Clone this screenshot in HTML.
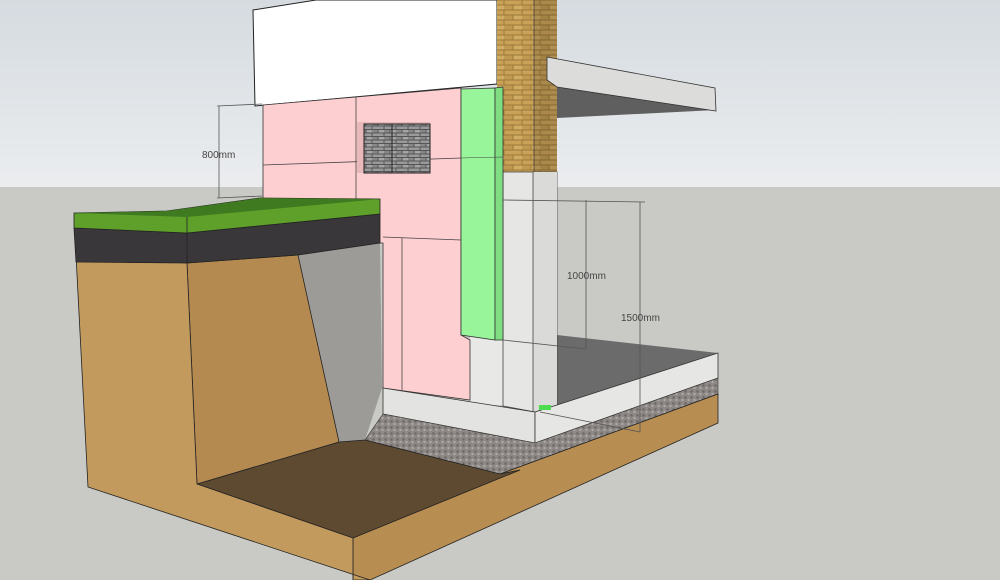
<!DOCTYPE html>
<html><head><meta charset="utf-8"><style>
html,body{margin:0;padding:0;width:1000px;height:580px;overflow:hidden}
svg{display:block}
text{font-family:"Liberation Sans",sans-serif;font-size:10px;fill:#444}
</style></head><body>
<svg width="1000" height="580" viewBox="0 0 1000 580" xmlns="http://www.w3.org/2000/svg">
<defs>
<linearGradient id="sky" x1="0" y1="0" x2="0" y2="1">
<stop offset="0" stop-color="#d5dbe0"/><stop offset="1" stop-color="#ebedef"/></linearGradient>
<pattern id="brick" width="18" height="10" patternUnits="userSpaceOnUse">
<rect width="18" height="10" fill="#9c7a3c"/><rect x="0.5" y="0.5" width="17" height="4" fill="#c9a257"/><rect x="-8.5" y="5.5" width="17" height="4" fill="#bf9a50"/><rect x="9.5" y="5.5" width="17" height="4" fill="#d0ab62"/></pattern>
<pattern id="gbrick" width="12" height="7" patternUnits="userSpaceOnUse">
<rect width="12" height="7" fill="#555"/><rect x="0.5" y="0.5" width="11" height="2.5" fill="#9a9a9a"/><rect x="-5.5" y="4" width="11" height="2.5" fill="#888"/><rect x="6.5" y="4" width="11" height="2.5" fill="#a5a5a5"/></pattern>
<pattern id="grav" width="6" height="6" patternUnits="userSpaceOnUse">
<rect width="6" height="6" fill="#8d8885"/><circle cx="1.5" cy="1.5" r="1.2" fill="#6a6663"/><circle cx="4.5" cy="4" r="1.1" fill="#b0aca8"/></pattern>
</defs>
<rect width="1000" height="188" fill="url(#sky)"/>
<rect y="187" width="1000" height="393" fill="#c9cac5"/>

<!-- white slab -->
<polygon points="253,10 316,0 497,0 497,84 255,106" fill="#fff" stroke="#222" stroke-width="1"/>
<!-- brick column -->
<rect x="497" y="0" width="60" height="172" fill="url(#brick)"/>
<polygon points="534,0 557,0 557,172 534,172" fill="#000" opacity="0.15"/>
<line x1="534" y1="0" x2="534" y2="172" stroke="#333" stroke-width="0.7"/>
<!-- overhang slab -->
<polygon points="557,87 716,110 557,118" fill="#5f5f5f"/>
<polygon points="547,57 715,88 716,111 557,87 547,80" fill="#dcdcda" stroke="#333" stroke-width="0.8"/>
<!-- floor slab dark top -->
<polygon points="557,335 718,353 557,405 535,412 505,402" fill="#6b6b6b"/>
<!-- concrete column -->
<rect x="470" y="330" width="35" height="75" fill="#e8e8e6"/>
<polygon points="503,172 557,172 557,405 535,412 503,406" fill="#e6e6e4" stroke="#444" stroke-width="0.8"/>
<polygon points="533,172 557,172 557,405 533,412" fill="#dadad8"/>
<line x1="533" y1="172" x2="533" y2="412" stroke="#444" stroke-width="0.8"/>
<!-- pink wall -->
<polygon points="263,105 461,88 461,335 470,340 470,400 383,388 383,243 263,243" fill="#fecfd0" stroke="#333" stroke-width="0.8"/>
<polyline points="263,165 461,158" fill="none" stroke="#444" stroke-width="0.8"/>
<line x1="356" y1="97" x2="356" y2="238" stroke="#444" stroke-width="0.8"/>
<polyline points="383,237 461,240" fill="none" stroke="#444" stroke-width="0.8"/>
<line x1="402" y1="238" x2="402" y2="390" stroke="#444" stroke-width="0.8"/>
<!-- window -->
<rect x="357" y="122" width="73" height="51" fill="#e9b8bb"/>
<rect x="364" y="124" width="66" height="49" fill="url(#gbrick)" stroke="#222" stroke-width="1"/>
<line x1="392" y1="124" x2="392" y2="173" stroke="#222"/>
<!-- green -->
<polygon points="461,89 495,88 495,340 461,335" fill="#98f59a" stroke="#333" stroke-width="0.8"/>
<polygon points="495,88 503,87 503,340 495,340" fill="#7fdd82" stroke="#333" stroke-width="0.8"/>
<line x1="461" y1="158" x2="503" y2="157" stroke="#444" stroke-width="0.6"/>
<!-- slab faces -->
<polygon points="383,388 535,412 535,443 383,414" fill="#e3e3e1" stroke="#333" stroke-width="0.8"/>
<polygon points="535,412 557,405 718,353 718,378 535,443" fill="#e6e6e4" stroke="#333" stroke-width="0.8"/>
<rect x="539" y="405" width="12" height="5" fill="#4ddc4d"/>
<!-- gravel -->
<polygon points="383,414 535,443 718,378 718,394 500,474 365,440" fill="url(#grav)" stroke="#333" stroke-width="0.6"/>
<!-- soil base right face -->
<polygon points="353,538 500,474 718,394 718,423 370,580 353,580" fill="#b88d52" stroke="#222" stroke-width="0.8"/>
<!-- gray concrete slope -->
<polygon points="298,255 380,243 382,388 365,440 339,442" fill="#9c9b98"/>
<!-- trench floor -->
<polygon points="197,484 339,442 365,440 500,474 520,470 353,538" fill="#5e4a31" stroke="#222" stroke-width="0.8"/>
<!-- soil inner face -->
<polygon points="187,263 298,255 339,442 197,484" fill="#b58a50" stroke="#222" stroke-width="0.8"/>
<!-- soil front face -->
<polygon points="76,255 187,263 197,484 353,538 353,580 370,580 88,487" fill="#c29a5e" stroke="#222" stroke-width="0.8"/>
<!-- dark layer -->
<polygon points="74,228 187,233 380,214 380,243 298,255 187,263 76,262" fill="#3a373a" stroke="#222" stroke-width="0.8"/>
<!-- grass -->
<polygon points="74,213 167,211 260,198 380,199 380,214 187,233 74,228" fill="#5ea02a" stroke="#222" stroke-width="0.8"/>
<polygon points="74,213 167,211 260,198 380,199 187,217" fill="#3f7a20"/>
<line x1="187" y1="217" x2="187" y2="263" stroke="#222" stroke-width="0.8"/>
<!-- dimensions -->
<g stroke="#555" stroke-width="0.8" fill="none">
<line x1="219" y1="106" x2="219" y2="198"/><line x1="217" y1="106" x2="262" y2="104"/><line x1="217" y1="198" x2="262" y2="196"/>
<line x1="503" y1="200" x2="645" y2="202"/>
<line x1="586" y1="200" x2="586" y2="349"/><line x1="503" y1="340" x2="586" y2="349"/>
<line x1="640" y1="202" x2="640" y2="432"/><line x1="540" y1="412" x2="640" y2="432"/>
</g>
<text x="202" y="158">800mm</text>
<text x="567" y="279">1000mm</text>
<text x="621" y="321">1500mm</text>
</svg>
</body></html>
